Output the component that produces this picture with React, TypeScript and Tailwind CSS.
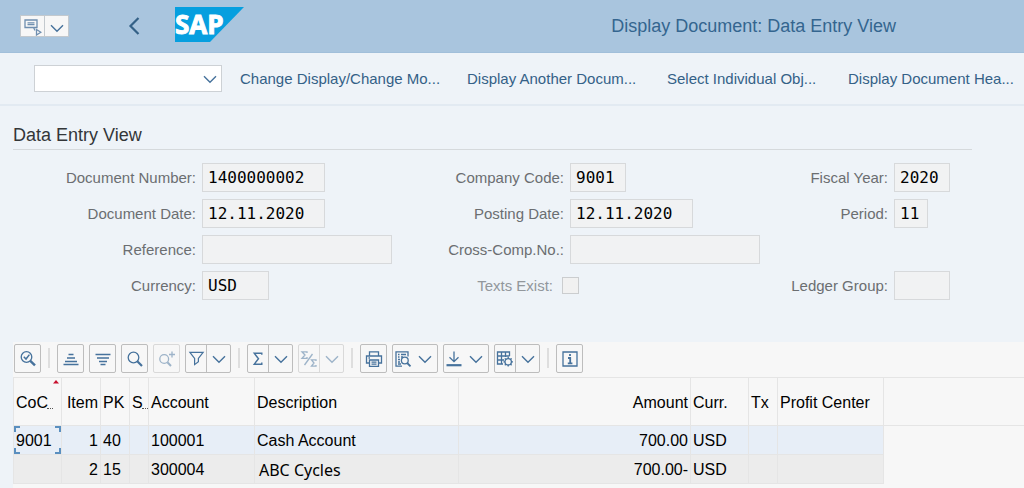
import React from "react";

const ink = "#46729c";

function Chevron({ className = "" }: { className?: string }) {
  return (
    <svg width="14" height="14" viewBox="0 0 14 14" fill="none" stroke={ink} strokeWidth="1.4" className={className} aria-hidden="true">
      <path d="M1 4.2 L7 10.2 L13 4.2" />
    </svg>
  );
}

function Icon({ children, size = 18 }: { children: React.ReactNode; size?: number }) {
  return (
    <svg width={size} height={size} viewBox="0 0 18 18" fill="none" stroke={ink} strokeWidth="1.3" className="shrink-0" aria-hidden="true">
      {children}
    </svg>
  );
}

const icons = {
  details: (
    <Icon>
      <circle cx="7.5" cy="7" r="5.3" />
      <path d="M4.8 6.8 L7 9 L10.4 4.6" strokeWidth="1.5" />
      <path d="M11.3 10.8 L16 15.3" strokeWidth="2.4" />
    </Icon>
  ),
  ascending: (
    <Icon>
      <path d="M6.5 4.5 H11.5 M5 8 H13 M3 11.5 H15 M1.5 14.5 H16.5" />
    </Icon>
  ),
  descending: (
    <Icon>
      <path d="M1.5 4.5 H16.5 M3 8 H15 M5 11.5 H13 M6.5 14.5 H11.5" />
    </Icon>
  ),
  find: (
    <Icon>
      <circle cx="7.5" cy="7.5" r="5.3" />
      <path d="M11.3 11.3 L16 16" strokeWidth="2.2" />
    </Icon>
  ),
  findNext: (
    <Icon>
      <circle cx="6.2" cy="9" r="4.4" />
      <path d="M9.4 12.3 L13 16" strokeWidth="2" />
      <path d="M14 1.5 V7.5 M11 4.5 H17" />
    </Icon>
  ),
  filter: (
    <Icon size={17}>
      <path d="M2 2.5 H16 L11 9 V12.5 L7 15.5 V9 Z" />
    </Icon>
  ),
  sum: (
    <Icon size={17}>
      <path d="M12.5 5 V3.5 H4.5 L9 9.2 L4.5 15 H12.5 V13.2" strokeWidth="1.5" />
    </Icon>
  ),
  subtotal: (
    <Icon>
      <path d="M7 3 V1.8 H2 L5 5 L2 8.3 H7 V7 M16 11 V9.8 H11.5 L14 13 L11.5 16.2 H16 V15 M12.5 4 L4.5 15" />
    </Icon>
  ),
  print: (
    <Icon>
      <path d="M4.5 6 V1.8 H13.5 V6 M4.5 13 H1.5 V6 H16.5 V13 H13.5 M4.5 10 H13.5 V16.3 H4.5 Z M6.5 12.2 H11.5 M6.5 14.2 H11.5 M3.5 8 H5" />
    </Icon>
  ),
  views: (
    <Icon>
      <path d="M14 6.5 V1.8 H2 V16.2 H8 M4 4.5 H5.5 M7 4.5 H12 M4 7 H5.5 M7 7 H9 M4 9.5 H6 M4 12 H6 M4 14 H7" />
      <circle cx="10.8" cy="10.5" r="3.4" />
      <path d="M13.2 13 L16.5 16.3" strokeWidth="1.8" />
    </Icon>
  ),
  exportFile: (
    <Icon>
      <path d="M9 1.5 V11 M4.5 7.2 L9 11.6 L13.5 7.2" />
      <path d="M1.5 15.2 H16.5" strokeWidth="2.2" />
    </Icon>
  ),
  layout: (
    <Icon>
      <path d="M7 14 H1.5 V2 H13.5 V6 M1.5 6 H13.5 M1.5 10 H8 M5.5 2 V14 M9.5 2 V7" />
      <circle cx="12.2" cy="11.8" r="3.2" />
      <path d="M12.2 7 V8.6 M12.2 15 V16.6 M7.4 11.8 H9 M15.4 11.8 H17 M8.8 8.4 L9.9 9.5 M14.5 14.1 L15.6 15.2 M15.6 8.4 L14.5 9.5 M9.9 14.1 L8.8 15.2" />
    </Icon>
  ),
  info: (
    <Icon>
      <path d="M2 2 H16 V16 H2 Z" />
      <path d="M9 4 V6 M7 8 H9.2 V13.3 M6.8 13.3 H11.4" strokeWidth="1.8" />
    </Icon>
  ),
};

const frame = "flex h-[29px] shrink-0 items-center rounded-[2px] border border-[#bdbdbd] bg-[#f7f7f7]";

function ToolButton({ label, icon, disabled = false }: { label: string; icon: React.ReactNode; disabled?: boolean }) {
  return (
    <button type="button" aria-label={label} disabled={disabled} className={`${frame} w-[27px] justify-center disabled:opacity-50`}>
      {icon}
    </button>
  );
}

function SplitButton({ label, icon, disabled = false }: { label: string; icon: React.ReactNode; disabled?: boolean }) {
  return (
    <div className={`${frame} w-[46px] ${disabled ? "opacity-50" : ""}`}>
      <button type="button" aria-label={label} disabled={disabled} className="flex h-full w-5 items-center justify-center">
        {icon}
      </button>
      <button type="button" aria-label={`${label} options`} disabled={disabled} className="flex h-full flex-1 items-center justify-center border-l border-[#bdbdbd]">
        <Chevron />
      </button>
    </div>
  );
}

function MenuButton({ label, icon }: { label: string; icon: React.ReactNode }) {
  return (
    <button type="button" aria-label={label} className={`${frame} w-[46px] justify-between pr-[5px] pl-px`}>
      {icon}
      <Chevron />
    </button>
  );
}

function Separator() {
  return <div className="mx-0.5 mt-1 h-5 w-0.5 shrink-0 bg-[#dedede]" />;
}

function Field({ id, label, value = "", width }: { id: string; label: string; value?: string; width: string }) {
  return (
    <div className="flex h-[29px] items-center gap-1.5">
      <label htmlFor={id} className="w-[183px] shrink-0 pt-0.5 text-right text-[15px] text-[#6b6e71]">
        {label}:
      </label>
      <input
        id={id}
        readOnly
        value={value}
        className={`h-[29px] ${width} border border-[#d7d9db] bg-[#f1f2f3] px-[5px] font-['DejaVu_Sans_Mono',monospace] text-[16px] text-black outline-none`}
      />
    </div>
  );
}

const th = "h-12 border-r border-b border-[#e5e5e5] px-0.5 pt-0.5 text-left font-normal";
const td = "h-[29px] border-r border-b border-[#e5e5e5] px-0.5 pt-0.5";

export default function App() {
  return (
    <div className="flex min-h-screen flex-col overflow-hidden bg-[#eef3f8] font-['Liberation_Sans',Arial,sans-serif] text-black">
      <header className="flex h-[53px] items-center border-b border-[#a1bfda] bg-[#a9c5de] pl-5">
        <div className="flex h-[22px] w-[49px] border border-[#c3c9ce] bg-[#f7f7f7]">
          <button type="button" aria-label="Menu" className="flex w-6 items-center justify-center border-r border-[#c3c9ce]">
            <svg width="20" height="20" viewBox="0 0 20 20" fill="none" stroke="#6f8fb0" strokeWidth="1.3" aria-hidden="true">
              <path d="M10.5 11.5 H2 V4 H14 V11.5 H10.5 L12 14.5" />
              <path d="M4.5 6.8 H11.5 M4.5 8.6 H11.5" />
              <path d="M13.5 13.5 L17.8 16.3 L13.5 19 Z" />
            </svg>
          </button>
          <button type="button" aria-label="Menu options" className="flex flex-1 items-center justify-center">
            <Chevron className="mt-1" />
          </button>
        </div>
        <button type="button" aria-label="Back" className="ml-[59px] flex w-3 justify-center">
          <svg width="12" height="18" viewBox="0 0 12 18" fill="none" stroke="#346187" strokeWidth="2.2" aria-hidden="true">
            <path d="M10.5 1 L2.5 9 L10.5 17" />
          </svg>
        </button>
        <svg width="69" height="35" viewBox="0 0 69 35" className="mt-[7px] ml-[35px] shrink-0 self-start" role="img" aria-label="SAP">
          <path d="M0 0 H69 L35 35 H0 Z" fill="#069fdf" />
          <text x="0" y="26.5" fontSize="26" fontWeight="700" fill="#fff" stroke="#fff" strokeWidth="1" fontFamily="Open Sans, Noto Sans, sans-serif">
            SAP
          </text>
        </svg>
        <h1 className="mr-32 ml-auto text-[18px] whitespace-nowrap text-[#34658f]">Display Document: Data Entry View</h1>
      </header>

      <nav className="flex h-[53px] items-center border-b-2 border-[#e2eaf2] pl-[34px] text-[15px] whitespace-nowrap text-[#346187]">
        <div className="relative flex h-[27px] w-[188px] shrink-0">
          <select aria-label="Command" className="h-full w-full appearance-none border border-[#cdd1d5] bg-white outline-none">
            <option></option>
          </select>
          <Chevron className="pointer-events-none absolute top-[7px] right-[5px]" />
        </div>
        <div className="ml-[18px] grid flex-1 grid-cols-[227fr_200fr_181fr_176fr] pt-0.5">
          <button type="button" className="text-left">Change Display/Change Mo...</button>
          <button type="button" className="text-left">Display Another Docum...</button>
          <button type="button" className="text-left">Select Individual Obj...</button>
          <button type="button" className="text-left">Display Document Hea...</button>
        </div>
      </nav>

      <main className="flex flex-1 flex-col pt-[18px] pl-[13px]">
        <h2 className="mr-[52px] border-b border-[#d5d9dc] pb-0.5 text-[18px] leading-[23px] text-[#333638]">Data Entry View</h2>

        <form className="mt-[13px] grid grid-cols-[minmax(0,368fr)_minmax(0,324fr)_minmax(0,319fr)]">
          <div className="flex flex-col gap-[7px]">
            <Field id="document-number" label="Document Number" value="1400000002" width="w-[123px]" />
            <Field id="document-date" label="Document Date" value="12.11.2020" width="w-[123px]" />
            <Field id="reference" label="Reference" width="w-[190px]" />
            <Field id="currency" label="Currency" value="USD" width="w-[67px]" />
          </div>
          <div className="flex flex-col gap-[7px]">
            <Field id="company-code" label="Company Code" value="9001" width="w-14" />
            <Field id="posting-date" label="Posting Date" value="12.11.2020" width="w-[123px]" />
            <div className="min-w-max">
              <Field id="cross-company" label="Cross-Comp.No." width="w-[190px]" />
            </div>
            <div className="flex h-[29px] items-center gap-[9px]">
              <label htmlFor="texts-exist" className="w-[172px] pt-0.5 text-right text-[15px] text-[#92979c]">Texts Exist:</label>
              <input id="texts-exist" type="checkbox" disabled className="size-[17px] appearance-none border border-[#cbcdcf] bg-[#f1f1f1]" />
            </div>
          </div>
          <div className="flex flex-col gap-[7px]">
            <Field id="fiscal-year" label="Fiscal Year" value="2020" width="w-14" />
            <Field id="period" label="Period" value="11" width="w-[34px]" />
            <div className="h-[29px]" />
            <Field id="ledger-group" label="Ledger Group" width="w-14" />
          </div>
        </form>

        <section className="mt-[42px] flex-1 bg-[#f7f7f7]">
          <div className="flex h-9 items-start gap-[5px] border-b border-[#e5e5e5] pt-0.5 pl-px" role="toolbar" aria-label="Line items">
            <ToolButton label="Details" icon={icons.details} />
            <Separator />
            <ToolButton label="Sort ascending" icon={icons.ascending} />
            <ToolButton label="Sort descending" icon={icons.descending} />
            <ToolButton label="Find" icon={icons.find} />
            <ToolButton label="Find next" icon={icons.findNext} disabled />
            <SplitButton label="Filter" icon={icons.filter} />
            <Separator />
            <SplitButton label="Total" icon={icons.sum} />
            <SplitButton label="Subtotal" icon={icons.subtotal} disabled />
            <Separator />
            <ToolButton label="Print" icon={icons.print} />
            <MenuButton label="Views" icon={icons.views} />
            <MenuButton label="Export" icon={icons.exportFile} />
            <SplitButton label="Layout" icon={icons.layout} />
            <Separator />
            <ToolButton label="Information" icon={icons.info} />
          </div>

          <table className="w-full table-fixed border-separate border-spacing-0 text-[16px] leading-5 whitespace-nowrap">
            <colgroup>
              <col className="w-[49px]" />
              <col className="w-[39px]" />
              <col className="w-[29px]" />
              <col className="w-[19px]" />
              <col className="w-[106px]" />
              <col className="w-[204px]" />
              <col className="w-[232px]" />
              <col className="w-[58px]" />
              <col className="w-[29px]" />
              <col className="w-[106px]" />
              <col />
            </colgroup>
            <thead>
              <tr>
                <th scope="col" className={`${th} relative border-l`}>
                  CoC
                  <span className="absolute right-2 bottom-4 w-1.5 border-b border-dotted border-[#555]" />
                  <svg width="6" height="4" viewBox="0 0 6 4" className="absolute top-0.5 right-0.5" aria-hidden="true">
                    <path d="M0 3.5 L3 0 L6 3.5 Z" fill="#c8102e" />
                  </svg>
                </th>
                <th scope="col" className={`${th} text-right`}>Item</th>
                <th scope="col" className={th}>PK</th>
                <th scope="col" className={`${th} relative`}>
                  S
                  <span className="absolute right-0 bottom-4 w-1.5 border-b border-dotted border-[#555]" />
                </th>
                <th scope="col" className={th}>Account</th>
                <th scope="col" className={th}>Description</th>
                <th scope="col" className={`${th} text-right`}>Amount</th>
                <th scope="col" className={th}>Curr.</th>
                <th scope="col" className={th}>Tx</th>
                <th scope="col" className={th}>Profit Center</th>
                <td className="border-b border-[#e5e5e5]" />
              </tr>
            </thead>
            <tbody>
              <tr className="bg-[#e7eef7]">
                <td className={`${td} relative border-l`}>
                  9001
                  <span className="absolute top-0 left-0 size-1.5 border-t-2 border-l-2 border-[#5a8fbf]" />
                  <span className="absolute top-0 right-0 size-1.5 border-t-2 border-r-2 border-[#5a8fbf]" />
                  <span className="absolute bottom-0 left-0 size-1.5 border-b-2 border-l-2 border-[#5a8fbf]" />
                  <span className="absolute right-0 bottom-0 size-1.5 border-r-2 border-b-2 border-[#5a8fbf]" />
                </td>
                <td className={`${td} text-right`}>1</td>
                <td className={td}>40</td>
                <td className={td} />
                <td className={td}>100001</td>
                <td className={td}>Cash Account</td>
                <td className={`${td} text-right`}>700.00</td>
                <td className={td}>USD</td>
                <td className={td} />
                <td className={td} />
                <td className="bg-[#f7f7f7]" />
              </tr>
              <tr className="bg-[#ececec]">
                <td className={`${td} border-l`} />
                <td className={`${td} text-right`}>2</td>
                <td className={td}>15</td>
                <td className={td} />
                <td className={td}>300004</td>
                <td className="h-[29px] border-r border-b border-[#e5e5e5] pt-0.5 pl-1 font-['Noto_Sans',sans-serif]">ABC Cycles</td>
                <td className={`${td} text-right`}>700.00-</td>
                <td className={td}>USD</td>
                <td className={td} />
                <td className={td} />
                <td className="bg-[#f7f7f7]" />
              </tr>
            </tbody>
          </table>
        </section>
      </main>
    </div>
  );
}
